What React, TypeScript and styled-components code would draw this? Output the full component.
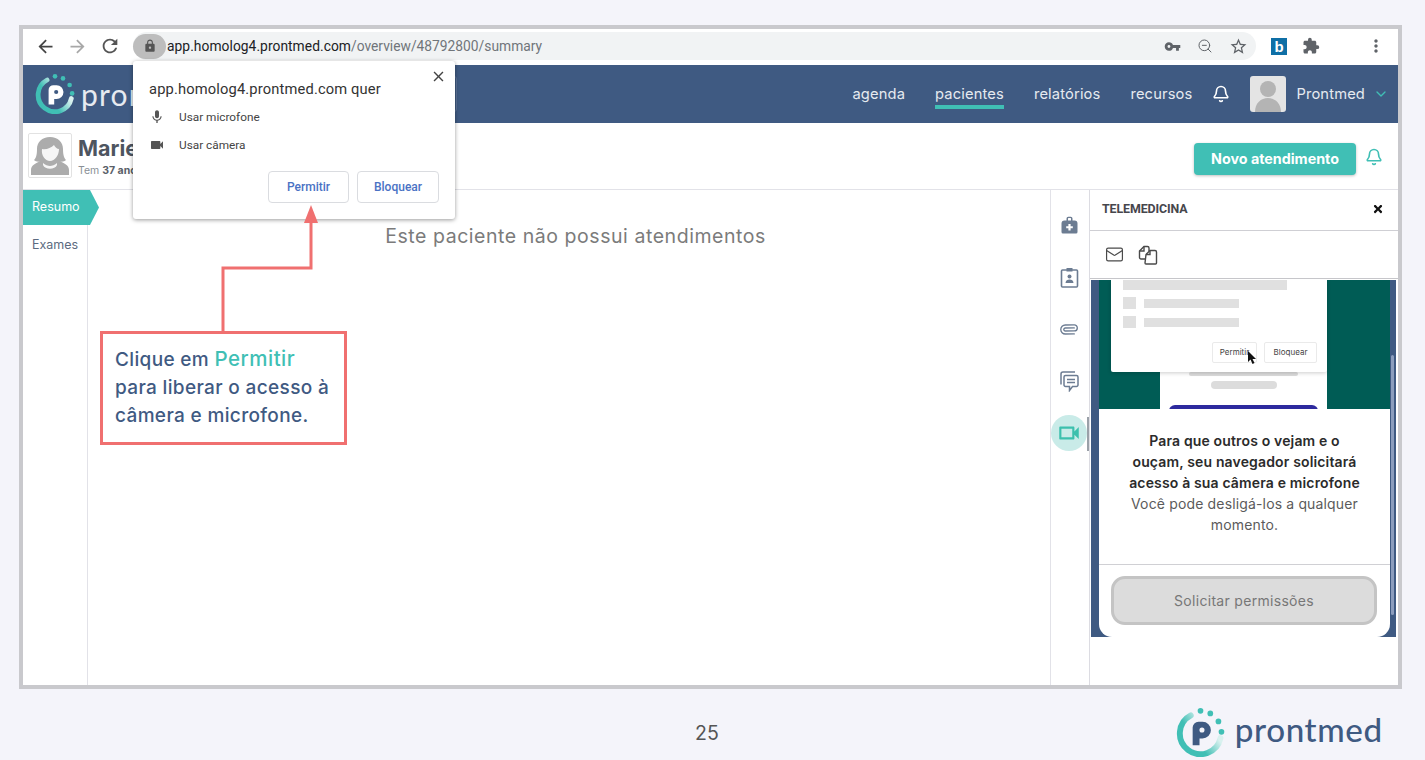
import React from "react";
import styled, { createGlobalStyle } from "styled-components";
import {
  MdArrowBack,
  MdArrowForward,
  MdRefresh,
  MdLock,
  MdVpnKey,
  MdStarBorder,
  MdExtension,
  MdMoreVert,
  MdMic,
  MdVideocam,
  MdClose,
  MdOutlineVideocam,
} from "react-icons/md";
import { FaTimes } from "react-icons/fa";
import { Bell, ChevronDown, Mail, Paperclip, ZoomOut } from "lucide-react";

const GlobalStyle = createGlobalStyle`
  html, body {
    margin: 0;
    background: #f4f4fa;
    font-family: "Inter", "Liberation Sans", sans-serif;
  }
  * { box-sizing: border-box; }
`;

const Page = styled.div`
  width: 1425px;
  height: 760px;
  padding: 25px 0 0 19px;
  overflow: hidden;
  display: flex;
  flex-direction: column;
`;

const Frame = styled.div`
  position: relative;
  width: 1383px;
  height: 664px;
  border: 4px solid #c9c9cd;
  background: #fff;
  display: flex;
  flex-direction: column;
`;

/* browser toolbar */
const BrowserBar = styled.div`
  height: 36px;
  flex: none;
  padding: 0 0 2px 12px;
  display: flex;
  align-items: center;
  background: #fff;
  color: #5f6368;
`;

const NavIcon = styled.span<{ $width: number }>`
  width: ${(p) => p.$width}px;
  flex: none;
  display: flex;
  align-items: center;
`;

const AddressPill = styled.div`
  width: 1123px;
  height: 28px;
  flex: none;
  margin-left: 1px;
  border-radius: 14px;
  background: #f1f3f4;
  display: flex;
  align-items: center;
`;

const LockChip = styled.span`
  width: 33px;
  height: 25px;
  flex: none;
  border-radius: 13px;
  background: #bdbdbd;
  color: #555;
  display: flex;
  align-items: center;
  justify-content: center;
`;

const Url = styled.span`
  flex: 1;
  padding-left: 1px;
  font-family: "Roboto", "Liberation Sans", sans-serif;
  font-size: 13.8px;
  color: #70757a;
  white-space: nowrap;
`;

const UrlHost = styled.span`
  letter-spacing: 0.05px;
  color: #202124;
`;

const PillActions = styled.span`
  display: flex;
  align-items: center;
  gap: 16px;
  padding-right: 8px;
  color: #5f6368;
`;

const ExtensionBadge = styled.span`
  width: 16px;
  height: 17px;
  margin-left: 15px;
  flex: none;
  background: #0f6fa6;
  color: #fff;
  font-family: "Liberation Sans", sans-serif;
  font-size: 15px;
  font-weight: 700;
  line-height: 17px;
  text-align: center;
`;

const BarEnd = styled.span`
  display: flex;
  align-items: center;
  margin-left: 15px;
  gap: 46px;
  color: #5f6368;
`;

/* blue app header */
const AppHeader = styled.header`
  height: 58px;
  flex: none;
  padding: 0 9px 0 12px;
  background: #3f5a82;
  display: flex;
  align-items: center;
  color: #e6eaf0;
`;

const HeaderBrand = styled.span`
  margin-left: 6px;
  width: 60px;
  overflow: hidden;
  font-family: "Lato", sans-serif;
  font-size: 30px;
  letter-spacing: 1.2px;
`;

const SearchBox = styled.div`
  width: 100px;
  height: 36px;
  margin-left: 216px;
  flex: none;
  border: 1px solid #5c7397;
  border-radius: 3px;
`;

const HeaderNav = styled.nav`
  margin-left: auto;
  display: flex;
  align-items: center;
  gap: 30px;
`;

const NavLink = styled.a<{ $active?: boolean }>`
  position: relative;
  font-size: 14.7px;
  letter-spacing: 0.15px;
  line-height: 20px;
  color: #e6eaf0;
  &::after {
    content: "";
    display: ${(p) => (p.$active ? "block" : "none")};
    position: absolute;
    left: 0;
    right: 0;
    bottom: -5px;
    height: 4px;
    background: #40bfb5;
  }
`;

const HeaderBell = styled.span`
  display: flex;
  margin-left: 20px;
  color: #fff;
`;

const UserAvatar = styled.span`
  width: 36px;
  height: 36px;
  margin-left: 20px;
  flex: none;
  border-radius: 3px;
  overflow: hidden;
  background: #e4e4e4;
  display: flex;
`;

const UserName = styled.span`
  margin-left: 10px;
  font-size: 14.7px;
  letter-spacing: 0.15px;
`;

const UserChevron = styled.span`
  display: flex;
  margin-left: 8px;
  color: #40bfb5;
`;

/* patient strip */
const PatientBar = styled.div`
  height: 67px;
  flex: none;
  padding: 10px 0 0 5px;
  border-bottom: 1px solid #e2e2e8;
  display: flex;
  align-items: flex-start;
`;

const PatientPhoto = styled.div`
  width: 44px;
  height: 45px;
  flex: none;
  padding: 1px;
  border: 1px solid #e2e2e2;
  border-radius: 2px;
  display: flex;
`;

const PatientInfo = styled.div`
  margin-left: 6px;
  display: flex;
  flex-direction: column;
`;

const PatientName = styled.div`
  font-size: 21.5px;
  font-weight: 700;
  line-height: 30px;
  color: #4d5560;
`;

const PatientAge = styled.div`
  font-size: 10.5px;
  line-height: 14px;
  margin-top: 1px;
  color: #8a8f96;
  b {
    color: #5a6068;
    font-weight: 700;
  }
`;

const NewVisitButton = styled.button`
  width: 162px;
  height: 32px;
  margin: 10px 0 0 auto;
  padding: 0 0 2px;
  flex: none;
  border: 0;
  border-radius: 4px;
  background: #40bfb5;
  box-shadow: 0 1px 3px rgba(0, 0, 0, 0.25);
  color: #fff;
  font-family: inherit;
  font-size: 14.3px;
  font-weight: 700;
`;

const BarBell = styled.span`
  display: flex;
  margin: 15px 15px 0 9px;
  color: #40bfb5;
`;

/* main area */
const Workspace = styled.div`
  flex: 1;
  min-height: 0;
  display: flex;
`;

const SideMenu = styled.aside`
  width: 65px;
  flex: none;
  border-right: 1px solid #e2e2e8;
`;

const ActiveTab = styled.div`
  width: 76px;
  height: 35px;
  padding-left: 9px;
  background: #40bfb5;
  clip-path: polygon(0 0, 67px 0, 100% 50%, 67px 100%, 0 100%);
  color: #fff;
  font-size: 12.5px;
  line-height: 34px;
`;

const MenuItem = styled.div`
  padding: 12px 0 0 9px;
  font-size: 12.5px;
  line-height: 16px;
  color: #5c6b80;
`;

const Content = styled.main`
  flex: 1;
  padding: 34px 0 0 13px;
  text-align: center;
  font-size: 19.5px;
  line-height: 24px;
  letter-spacing: 0.55px;
  color: #7b7b7b;
`;

const Rail = styled.div`
  position: relative;
  width: 39px;
  flex: none;
  padding: 17px 3px 0 1px;
  border-left: 1px solid #e2e2e8;
  display: flex;
  flex-direction: column;
  align-items: center;
  gap: 16px;
`;

const RailButton = styled.span<{ $active?: boolean }>`
  width: 36px;
  height: 36px;
  flex: none;
  border-radius: 50%;
  display: flex;
  align-items: center;
  justify-content: center;
  background: ${(p) => (p.$active ? "#c9ebe8" : "transparent")};
  color: ${(p) => (p.$active ? "#3cc0ad" : "#6c7c92")};
`;

const RailMark = styled.span`
  position: absolute;
  right: 0;
  top: 227px;
  width: 2px;
  height: 34px;
  background: #9aa0a8;
`;

/* telemedicine panel */
const Panel = styled.section`
  width: 309px;
  flex: none;
  border-left: 1px solid #dcdce2;
  display: flex;
  flex-direction: column;
`;

const PanelHead = styled.div`
  height: 41px;
  flex: none;
  padding: 0 14px 3px 12px;
  border-bottom: 1px solid #cfcfd4;
  display: flex;
  align-items: center;
  justify-content: space-between;
`;

const PanelTitle = styled.span`
  font-family: "Roboto", sans-serif;
  font-size: 12.4px;
  font-weight: 700;
  letter-spacing: -0.1px;
  color: #46464c;
`;

const PanelTools = styled.div`
  height: 48px;
  flex: none;
  padding: 0 0 0 15px;
  border-bottom: 1px solid #c6c6ca;
  display: flex;
  align-items: center;
  gap: 14px;
  color: #4a4a4a;
`;

const VideoFrame = styled.div`
  position: relative;
  width: 305px;
  height: 357px;
  margin: 1px 0 0 1px;
  flex: none;
  padding: 0 6px 0 8px;
  background: #3f5a82;
`;

const VideoScroll = styled.span`
  position: absolute;
  right: 2px;
  top: 75px;
  width: 3px;
  height: 260px;
  border-radius: 2px;
  background: #8c9dbd;
`;

const PreviewImage = styled.div`
  position: relative;
  height: 129px;
  padding-left: 61px;
  background: #005c55;
  overflow: hidden;
`;

const PreviewColumn = styled.div`
  width: 167px;
  height: 100%;
  background: #fff;
  padding-top: 92px;
  display: flex;
  flex-direction: column;
  align-items: center;
`;

const PreviewPill = styled.span<{ $width: number; $height: number }>`
  width: ${(p) => p.$width}px;
  height: ${(p) => p.$height}px;
  flex: none;
  margin-bottom: 5px;
  border-radius: 4px;
  background: #dcdcdc;
`;

const PreviewPrimary = styled.span`
  width: 149px;
  height: 10px;
  margin-top: 11px;
  flex: none;
  border-radius: 6px 6px 0 0;
  background: #2d2a9e;
`;

const PreviewCard = styled.div`
  position: absolute;
  left: 12px;
  top: 0;
  width: 216px;
  height: 92px;
  padding-left: 12px;
  background: #fff;
  border-radius: 0 0 2px 2px;
  box-shadow: 0 1px 4px rgba(0, 0, 0, 0.2);
  display: flex;
  flex-direction: column;
`;

const GreyBar = styled.span<{ $width: number; $height: number }>`
  width: ${(p) => p.$width}px;
  height: ${(p) => p.$height}px;
  flex: none;
  background: #e0e0e0;
`;

const PreviewRow = styled.div`
  margin-top: 7px;
  display: flex;
  align-items: center;
  gap: 8px;
  height: 12px;
`;

const PreviewButtons = styled.div`
  margin: 14px 10px 0 0;
  display: flex;
  justify-content: flex-end;
  gap: 7px;
`;

const PreviewButton = styled.span<{ $width: number }>`
  position: relative;
  width: ${(p) => p.$width}px;
  height: 21px;
  border: 1px solid #eaeaea;
  border-radius: 2px;
  font-size: 8px;
  line-height: 19px;
  text-align: center;
  color: #444;
`;

const CursorMark = styled.svg`
  position: absolute;
  left: 34px;
  top: 8px;
`;

const PermissionCard = styled.div`
  height: 228px;
  background: #fff;
  border-radius: 0 0 13px 13px;
  display: flex;
  flex-direction: column;
`;

const PermissionText = styled.div`
  height: 156px;
  padding: 21px 0 0;
  border-bottom: 1px solid #d0d0d4;
  text-align: center;
  font-size: 14px;
  line-height: 21px;
  letter-spacing: 0.15px;
  color: #5b5b5b;
  b {
    display: block;
    font-weight: 600;
    color: #2b2b2b;
  }
`;

const PermissionButton = styled.button`
  width: 266px;
  height: 49px;
  margin: 11px 0 0 12px;
  flex: none;
  border: 3px solid #c4c4c4;
  border-radius: 14px;
  background: #dcdcdc;
  color: #777;
  font-family: inherit;
  font-size: 14px;
  letter-spacing: 0.3px;
`;

/* permission popup over the page */
const Popup = styled.div`
  position: absolute;
  left: 110px;
  top: 32px;
  width: 322px;
  height: 158px;
  padding: 18px 16px 0;
  background: #fff;
  border-radius: 3px;
  box-shadow: 0 1px 4px rgba(0, 0, 0, 0.4);
  font-family: "Roboto", "Liberation Sans", sans-serif;
`;

const PopupClose = styled.span`
  position: absolute;
  right: 8px;
  top: 7px;
  display: flex;
  color: #444;
`;

const PopupTitle = styled.div`
  margin-bottom: 4px;
  font-size: 14.7px;
  line-height: 20px;
  letter-spacing: 0.15px;
  color: #333;
`;

const PopupRow = styled.div`
  height: 28px;
  display: flex;
  align-items: center;
  font-size: 11.8px;
  color: #444;
  svg {
    width: 16px;
    margin-right: 14px;
    color: #555;
  }
`;

const PopupActions = styled.div`
  margin: 12px 0 0;
  display: flex;
  justify-content: flex-end;
  gap: 8px;
`;

const PopupButton = styled.button<{ $width: number }>`
  width: ${(p) => p.$width}px;
  height: 32px;
  background: #fff;
  border: 1px solid #dadce0;
  border-radius: 4px;
  color: #4a72c4;
  font-family: inherit;
  font-size: 12px;
  font-weight: 500;
`;

const CalloutArrow = styled.svg`
  position: absolute;
  left: 190px;
  top: 172px;
`;

const Callout = styled.div`
  position: absolute;
  left: 77px;
  top: 302px;
  width: 247px;
  height: 114px;
  padding: 11px 0 0 12px;
  background: #fff;
  border: 3px solid #f07070;
  font-size: 19px;
  line-height: 28px;
  letter-spacing: 0.35px;
  font-weight: 500;
  color: #3f5a82;
  span {
    font-size: 20.5px;
    color: #40bfb5;
    letter-spacing: 0.5px;
  }
`;

/* slide footer */
const SlideFooter = styled.footer`
  flex: 1;
  position: relative;
  display: flex;
  align-items: center;
  padding: 16px 0 0 676px;
`;

const PageNumber = styled.span`
  font-size: 19.5px;
  color: #555;
`;

const FooterBrand = styled.div`
  margin-left: 457px;
  display: flex;
  align-items: center;
  gap: 10px;
`;

const BrandName = styled.span`
  position: relative;
  top: -4px;
  font-family: "Lato", sans-serif;
  font-size: 33.2px;
  font-weight: 500;
  letter-spacing: 0.6px;
  color: #3f5a82;
`;

const Logo = ({ size, pColor, hole, id }: { size: number; pColor: string; hole: string; id: string }) => (
  <svg width={size} height={size} viewBox="0 0 50 50" fill="none">
    <defs>
      <linearGradient id={id} x1="42" y1="30" x2="20" y2="46" gradientUnits="userSpaceOnUse">
        <stop offset="0" stopColor="#d9f1ef" />
        <stop offset="0.7" stopColor="#40bfb5" />
      </linearGradient>
    </defs>
    <path d="M15.1 7.5 A21 21 0 1 0 45.4 30.7" stroke={`url(#${id})`} strokeWidth="6" strokeLinecap="round" />
    <circle cx="25" cy="2.9" r="2.9" fill="#40bfb5" />
    <circle cx="35" cy="5.5" r="2.9" fill="#40bfb5" />
    <circle cx="43.3" cy="13.7" r="2.9" fill="#40bfb5" />
    <circle cx="46.4" cy="24.3" r="2.9" fill="#40bfb5" />
    <path d="M17 38 V20 a6 6 0 0 1 6-6 h4 a8.6 8.6 0 0 1 0 17.2 h-3 V38 z" fill={pColor} />
    <circle cx="26.5" cy="22.5" r="2.6" fill={hole} />
  </svg>
);

const WomanSilhouette = () => (
  <svg width="40" height="41" viewBox="0 0 40 41">
    <path
      d="M20 2c8 0 13 5 13 12 0 6 1 9 3 11-2 2-5 2-7 1 5 2 10 4 10 9v5H1v-5c0-5 5-7 10-9-2 1-5 1-7-1 2-2 3-5 3-11C7 7 12 2 20 2z"
      fill="#acacac"
    />
    <path d="M12 14c4 1 9-1 12-4 1 2 3 4 5 4 0 6-4 12-9 12s-9-6-8-12z" fill="#f6f6f6" />
    <path d="M13 28c2 2 5 3 7 3s5-1 7-3v2c-2 5-12 5-14 0z" fill="#f6f6f6" />
  </svg>
);

const UserSilhouette = () => (
  <svg width="36" height="36" viewBox="0 0 36 36">
    <circle cx="18" cy="13" r="8" fill="#b4b4b4" />
    <path d="M5 36c0-9 6-14 13-14s13 5 13 14z" fill="#b4b4b4" />
  </svg>
);

const MedicalBag = () => (
  <svg width="17" height="18" viewBox="0 0 17 18">
    <path
      fillRule="evenodd"
      d="M5.5 4.5 V2.5 A1.8 1.8 0 0 1 7.3 .7 H9.7 A1.8 1.8 0 0 1 11.5 2.5 V4.5 H13.5 A3 3 0 0 1 16.5 7.5 V16 A1.5 1.5 0 0 1 15 17.5 H2 A1.5 1.5 0 0 1 .5 16 V7.5 A3 3 0 0 1 3.5 4.5 Z M7 4.5 H10 V2.6 A.5 .5 0 0 0 9.5 2.1 H7.5 A.5 .5 0 0 0 7 2.6 Z M7.4 8 V10.2 H5.2 V12.2 H7.4 V14.4 H9.6 V12.2 H11.8 V10.2 H9.6 V8 Z"
      fill="currentColor"
    />
  </svg>
);

const ClipboardUser = () => (
  <svg width="19" height="21" viewBox="0 0 19 21" fill="none" stroke="currentColor" strokeWidth="1.6">
    <rect x="1.5" y="3" width="16" height="17" rx="1" />
    <rect x="6.5" y="1" width="6" height="3.5" fill="currentColor" stroke="none" />
    <circle cx="9.5" cy="9.5" r="2" fill="currentColor" stroke="none" />
    <path d="M5.5 16c0-2.5 2-3.5 4-3.5s4 1 4 3.5z" fill="currentColor" stroke="none" />
  </svg>
);

const Comments = () => (
  <svg width="20" height="21" viewBox="0 0 20 21" fill="none" stroke="currentColor" strokeWidth="1.5">
    <path d="M2 13.5 V3 a2 2 0 0 1 2-2 h12" />
    <path d="M5 6 a1.5 1.5 0 0 1 1.5-1.5 H17.5 A1.5 1.5 0 0 1 19 6 v8 a1.5 1.5 0 0 1-1.5 1.5 H13.5 L10.5 19.5 V15.5 H6.5 A1.5 1.5 0 0 1 5 14 z" />
    <path d="M8 8.5 h8 M8 11.5 h8" />
  </svg>
);

const CopyPages = () => (
  <svg width="20" height="20" viewBox="0 0 20 20" fill="none" stroke="currentColor" strokeWidth="1.4">
    <path d="M7 14 H3 a1.5 1.5 0 0 1-1.5-1.5 V6 L6 1.5 h3.5 a1.5 1.5 0 0 1 1.5 1.5 v3" />
    <path d="M6 1.5 V6 H1.5" />
    <path d="M8 9.5 L12 5.5 h5 a1.5 1.5 0 0 1 1.5 1.5 v11 a1 1 0 0 1-1 1 h-9.5 a1 1 0 0 1-1-1 z" />
    <path d="M12 5.5 V9.5 H8" />
  </svg>
);

const App = () => (
  <Page>
    <GlobalStyle />
    <Frame>
      <BrowserBar>
        <NavIcon $width={32}>
          <MdArrowBack size={21} color="#444" />
        </NavIcon>
        <NavIcon $width={32}>
          <MdArrowForward size={21} color="#a8a8a8" />
        </NavIcon>
        <NavIcon $width={33}>
          <MdRefresh size={22} color="#555" />
        </NavIcon>
        <AddressPill>
          <LockChip>
            <MdLock size={14} />
          </LockChip>
          <Url>
            <UrlHost>app.homolog4.prontmed.com</UrlHost>/overview/48792800/summary
          </Url>
          <PillActions>
            <MdVpnKey size={17} />
            <ZoomOut size={16} strokeWidth={1.5} />
            <MdStarBorder size={19} />
          </PillActions>
        </AddressPill>
        <ExtensionBadge>b</ExtensionBadge>
        <BarEnd>
          <MdExtension size={18} />
          <MdMoreVert size={20} />
        </BarEnd>
      </BrowserBar>

      <AppHeader>
        <Logo size={40} pColor="#fff" hole="#3f5a82" id="header-ring" />
        <HeaderBrand>prontmed</HeaderBrand>
        <SearchBox />
        <HeaderNav>
          <NavLink>agenda</NavLink>
          <NavLink $active>pacientes</NavLink>
          <NavLink>relatórios</NavLink>
          <NavLink>recursos</NavLink>
        </HeaderNav>
        <HeaderBell>
          <Bell size={18} strokeWidth={2.2} />
        </HeaderBell>
        <UserAvatar>
          <UserSilhouette />
        </UserAvatar>
        <UserName>Prontmed</UserName>
        <UserChevron>
          <ChevronDown size={16} />
        </UserChevron>
      </AppHeader>

      <PatientBar>
        <PatientPhoto>
          <WomanSilhouette />
        </PatientPhoto>
        <PatientInfo>
          <PatientName>Marie</PatientName>
          <PatientAge>
            Tem <b>37 anos</b>
          </PatientAge>
        </PatientInfo>
        <NewVisitButton>Novo atendimento</NewVisitButton>
        <BarBell>
          <Bell size={18} strokeWidth={2.2} />
        </BarBell>
      </PatientBar>

      <Workspace>
        <SideMenu>
          <ActiveTab>Resumo</ActiveTab>
          <MenuItem>Exames</MenuItem>
        </SideMenu>
        <Content>Este paciente não possui atendimentos</Content>
        <Rail>
          <RailButton>
            <MedicalBag />
          </RailButton>
          <RailButton>
            <ClipboardUser />
          </RailButton>
          <RailButton>
            <Paperclip size={18} strokeWidth={1.8} transform="rotate(45)" />
          </RailButton>
          <RailButton>
            <Comments />
          </RailButton>
          <RailButton $active>
            <MdOutlineVideocam size={26} />
          </RailButton>
          <RailMark />
        </Rail>
        <Panel>
          <PanelHead>
            <PanelTitle>TELEMEDICINA</PanelTitle>
            <FaTimes size={12} color="#111" />
          </PanelHead>
          <PanelTools>
            <Mail size={19} strokeWidth={1.5} />
            <CopyPages />
          </PanelTools>
          <VideoFrame>
            <VideoScroll />
            <PreviewImage>
              <PreviewColumn>
                <PreviewPill $width={109} $height={4} />
                <PreviewPill $width={66} $height={8} />
                <PreviewPrimary />
              </PreviewColumn>
              <PreviewCard>
                <GreyBar $width={164} $height={10} />
                <PreviewRow>
                  <GreyBar $width={13} $height={12} />
                  <GreyBar $width={95} $height={9} />
                </PreviewRow>
                <PreviewRow>
                  <GreyBar $width={13} $height={12} />
                  <GreyBar $width={95} $height={9} />
                </PreviewRow>
                <PreviewButtons>
                  <PreviewButton $width={45}>
                    Permitir
                    <CursorMark width="10" height="14" viewBox="0 0 10 14">
                      <path d="M1 0 V11 L3.5 8.5 L5.5 13 L7.5 12 L5.5 8 H9 z" fill="#111" />
                    </CursorMark>
                  </PreviewButton>
                  <PreviewButton $width={53}>Bloquear</PreviewButton>
                </PreviewButtons>
              </PreviewCard>
            </PreviewImage>
            <PermissionCard>
              <PermissionText>
                <b>
                  Para que outros o vejam e o
                  <br />
                  ouçam, seu navegador solicitará
                  <br />
                  acesso à sua câmera e microfone
                </b>
                Você pode desligá-los a qualquer
                <br />
                momento.
              </PermissionText>
              <PermissionButton>Solicitar permissões</PermissionButton>
            </PermissionCard>
          </VideoFrame>
        </Panel>
      </Workspace>

      <Popup>
        <PopupClose>
          <MdClose size={17} />
        </PopupClose>
        <PopupTitle>app.homolog4.prontmed.com quer</PopupTitle>
        <PopupRow>
          <MdMic size={16} />
          Usar microfone
        </PopupRow>
        <PopupRow>
          <MdVideocam size={16} />
          Usar câmera
        </PopupRow>
        <PopupActions>
          <PopupButton $width={81}>Permitir</PopupButton>
          <PopupButton $width={82}>Bloquear</PopupButton>
        </PopupActions>
      </Popup>

      <CalloutArrow width="110" height="132" viewBox="0 0 110 132">
        <path d="M10 131 V67 H98 V22" fill="none" stroke="#f07070" strokeWidth="3" />
        <path d="M98 4 L105 22 H91 z" fill="#f07070" />
      </CalloutArrow>

      <Callout>
        Clique em <span>Permitir</span>
        <br />
        para liberar o acesso à
        <br />
        câmera e microfone.
      </Callout>
    </Frame>
    <SlideFooter>
      <PageNumber>25</PageNumber>
      <FooterBrand>
        <Logo size={49} pColor="#3f5a82" hole="#f4f4fa" id="footer-ring" />
        <BrandName>prontmed</BrandName>
      </FooterBrand>
    </SlideFooter>
  </Page>
);

export default App;
